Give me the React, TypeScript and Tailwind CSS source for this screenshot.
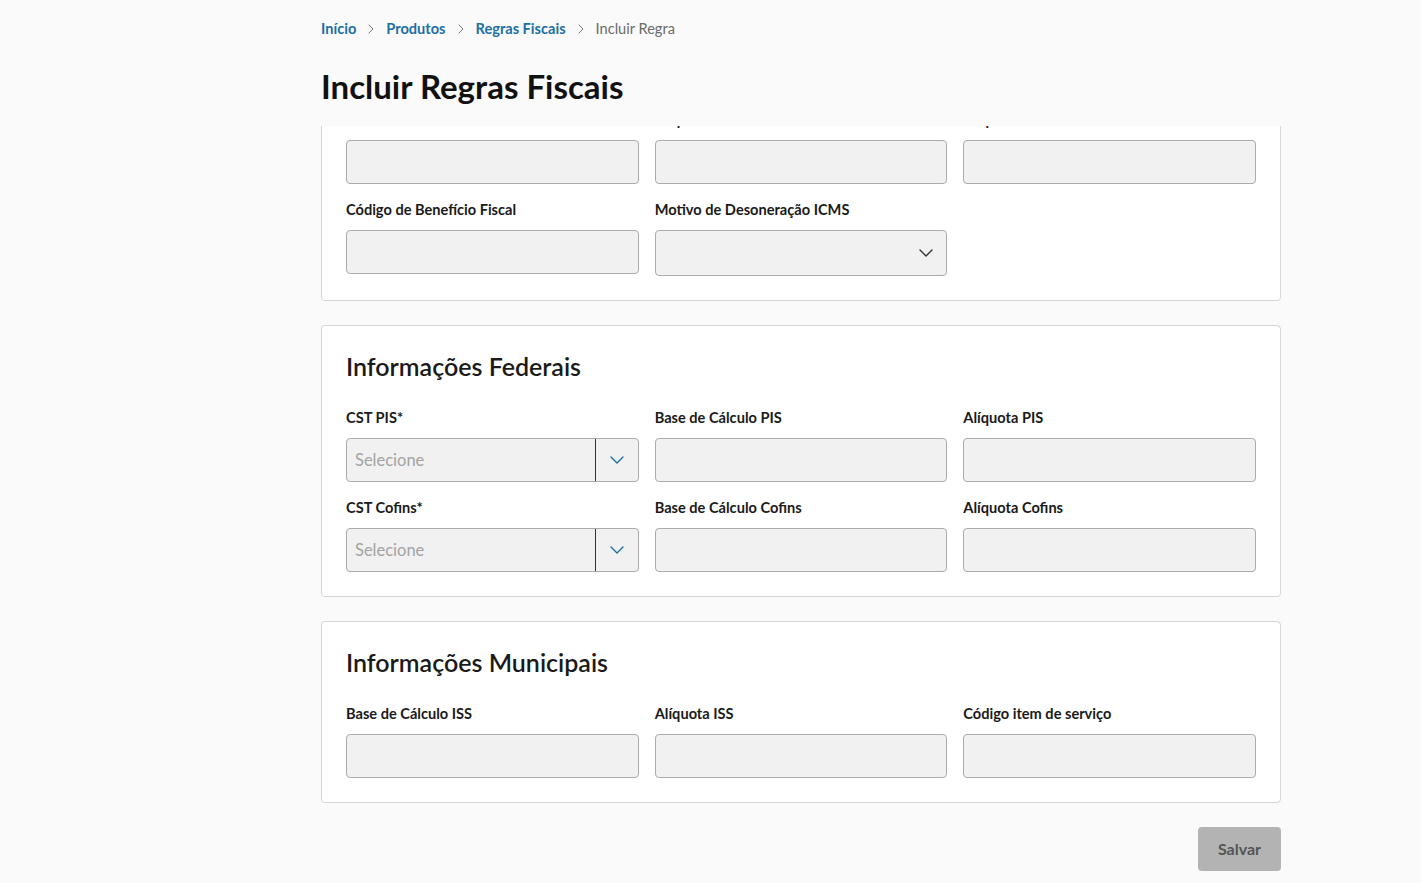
import { ChevronRight, ChevronDown } from 'lucide-react';

const font = { fontFamily: 'Lato, "Noto Sans", sans-serif' };

const Field = ({ label }: { label: string }) => (
  <div className="flex flex-col">
    <label className="text-[14.6px] leading-5 font-bold text-[#1a1a1a] mb-[10px] whitespace-nowrap">{label}</label>
    <div className="h-[44px] rounded-[4px] border border-[#ababab] bg-[#f1f1f1]"></div>
  </div>
);

const SelectSplit = ({ label }: { label: string }) => (
  <div className="flex flex-col">
    <label className="text-[14.6px] leading-5 font-bold text-[#1a1a1a] mb-[10px]">{label}</label>
    <div className="h-[44px] rounded-[4px] border border-[#ababab] bg-[#f1f1f1] flex">
      <div className="flex-1 flex items-center pl-2 text-[16.5px] text-[#a3a3a3]">Selecione</div>
      <div className="w-[43px] border-l border-[#333] flex items-center justify-center">
        <ChevronDown className="w-6 h-6 text-[#1d6fa5]" strokeWidth={1.4} />
      </div>
    </div>
  </div>
);

const SelectPlain = ({ label }: { label: string }) => (
  <div className="flex flex-col">
    <label className="text-[14.6px] leading-5 font-bold text-[#1a1a1a] mb-[10px]">{label}</label>
    <div className="h-[46px] rounded-[4px] border border-[#ababab] bg-[#f1f1f1] flex items-center justify-end pr-[8px]">
      <ChevronDown className="w-6 h-6 text-[#333]" strokeWidth={1.4} />
    </div>
  </div>
);

const Card = ({ title, children }: { title?: string; children: React.ReactNode }) => (
  <section className="bg-white border border-[#d6d6d6] rounded-[4px] px-6 pt-6 pb-6">
    {title && <h2 className="text-[25px] leading-8 font-semibold text-[#1a1a1a] mb-[26px]">{title}</h2>}
    <div className="grid grid-cols-3 gap-x-4 gap-y-4">{children}</div>
  </section>
);

export default function App() {
  return (
    <div className="h-screen flex flex-col bg-[#fafafa] overflow-hidden" style={font}>
      <header className="h-[126px] shrink-0 pl-[321px] pt-[19px] relative z-10 bg-[#fafafa]">
        <nav className="flex items-center text-[14.6px] leading-5">
          <a className="font-bold text-[#1d6fa5]">Início</a>
          <ChevronRight className="w-4 h-4 mx-[7px] text-[#777]" strokeWidth={1.5} />
          <a className="font-bold text-[#1d6fa5]">Produtos</a>
          <ChevronRight className="w-4 h-4 mx-[7px] text-[#777]" strokeWidth={1.5} />
          <a className="font-bold text-[#1d6fa5]">Regras Fiscais</a>
          <ChevronRight className="w-4 h-4 mx-[7px] text-[#777]" strokeWidth={1.5} />
          <span className="text-[#6b6b6b]">Incluir Regra</span>
        </nav>
        <h1 className="mt-[27px] text-[33px] leading-10 font-bold text-[#111]">Incluir Regras Fiscais</h1>
      </header>
      <div className="flex-1 overflow-hidden">
        {/* scrolled: top of the first card sits under the header */}
        <div className="ml-[321px] w-[960px] -mt-[41px] flex flex-col gap-6">
          <Card>
            <Field label="Base de Cálculo ICMS" />
            <Field label="Alíquota ICMS" />
            <Field label="Alíquota FCP" />
            <Field label="Código de Benefício Fiscal" />
            <SelectPlain label="Motivo de Desoneração ICMS" />
          </Card>
          <Card title="Informações Federais">
            <SelectSplit label="CST PIS*" />
            <Field label="Base de Cálculo PIS" />
            <Field label="Alíquota PIS" />
            <SelectSplit label="CST Cofins*" />
            <Field label="Base de Cálculo Cofins" />
            <Field label="Alíquota Cofins" />
          </Card>
          <Card title="Informações Municipais">
            <Field label="Base de Cálculo ISS" />
            <Field label="Alíquota ISS" />
            <Field label="Código item de serviço" />
          </Card>
          <div className="flex justify-end">
            <button className="h-[44px] w-[83px] rounded-[4px] bg-[#b3b3b3] text-[16px] leading-5 font-bold text-[#555]">Salvar</button>
          </div>
        </div>
      </div>
    </div>
  );
}
